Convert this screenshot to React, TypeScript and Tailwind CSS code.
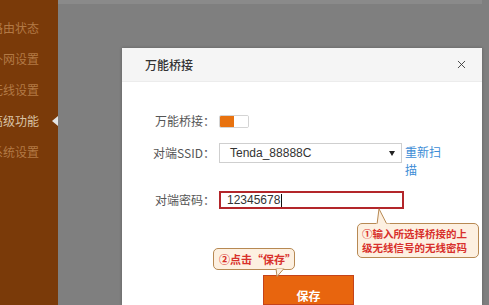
import { X } from "lucide-react";

const navItems = [
  { label: "路由状态", active: false },
  { label: "外网设置", active: false },
  { label: "无线设置", active: false },
  { label: "高级功能", active: true },
  { label: "系统设置", active: false },
];

const cjk = "font-['Noto_Sans_CJK_SC','Noto_Sans',sans-serif]";

export default function App() {
  return (
    <div className={`flex h-[305px] w-[489px] overflow-hidden bg-[#7f7f7f] ${cjk}`}>
      {/* Sidebar */}
      <aside className="flex w-[58px] shrink-0 flex-col overflow-hidden bg-[#7a3a09] pt-[12px]">
        {navItems.map((item) => (
          <div key={item.label} className="flex h-[31px] items-center justify-end gap-[13px]">
            <span
              className={`whitespace-nowrap text-[12px] ${
                item.active ? "text-[#d9c3a6]" : "text-[#b27945]"
              }`}
            >
              {item.label}
            </span>
            <span
              className={`h-0 w-0 border-y-[5px] border-r-[6px] border-y-transparent ${
                item.active ? "border-r-[#e4e4e4]" : "border-r-transparent"
              }`}
            />
          </div>
        ))}
      </aside>

      {/* Main */}
      <main className="flex flex-1 flex-col">
        <div className="h-[9px] bg-[#8a8a8a]" />
        <div className="ml-[64px] mt-[44px] flex w-[360px] flex-1 flex-col bg-white shadow-[0_0_3px_rgba(0,0,0,0.25)]">
          {/* Header */}
          <div className="flex h-[34px] items-center justify-between border-b border-[#ececec] bg-[#f5f5f5] pl-[23px] pr-[14px]">
            <span className="text-[12px] font-medium text-[#333]">万能桥接</span>
            <X className="h-[13px] w-[13px] text-[#333]" strokeWidth={1.6} />
          </div>

          {/* Body */}
          <div className="relative flex-1">
            <div className="flex flex-col pt-[32px] text-[12px] text-[#555]">
              <div className="flex h-[14px] items-center">
                <span className="w-[93px] text-right">万能桥接：</span>
                <div className="ml-[4px] flex h-[13px] w-[30px] overflow-hidden rounded-[2px] border border-[#d4d4d4]">
                  <div className="w-[14px] bg-[#e8720f]" />
                  <div className="flex-1 bg-white" />
                </div>
              </div>

              <div className="mt-[15px] flex items-start">
                <span className="mt-[2px] w-[93px] text-right leading-[16px]">对端SSID：</span>
                <div className="ml-[4px] flex h-[20px] w-[183px] items-center justify-between border border-[#cfcfcf] pl-[10px] pr-[6px] font-['Liberation_Sans',sans-serif] text-[12px] text-[#333]">
                  <span>Tenda_88888C</span>
                  <span className="h-0 w-0 border-x-[3px] border-t-[5px] border-x-transparent border-t-[#222]" />
                </div>
                <span className="ml-[3px] w-[38px] leading-[18px] text-[#3d8dd6]">重新扫描</span>
              </div>

              <div className="mt-[12px] flex items-center">
                <span className="w-[93px] text-right">对端密码：</span>
                <div className="ml-[4px] flex h-[18px] w-[185px] items-center border-2 border-[#b3262a] pl-[6px] font-['Liberation_Sans',sans-serif] text-[12px] text-[#333]">
                  <span>12345678</span>
                  <span className="ml-px h-[13px] w-px bg-[#111]" />
                </div>
              </div>

              <div className="ml-[141px] mt-[66px] flex h-[30px] w-[91px] items-start justify-center border border-[#c4431a] bg-[#e8650e] pt-[11px]">
                <span className="text-[12px] font-bold text-white">保存</span>
              </div>
            </div>

            {/* Annotation 1 */}
            <div className="absolute left-[235px] top-[141px] h-[35px] w-[122px] rounded-[5px] border border-[#b78953] bg-[#fdf0e1] px-[4px] pt-[3px] text-[10.5px] font-bold leading-[14px] whitespace-nowrap text-[#d8302c]">
              <div>①输入所选择桥接的上</div>
              <div>级无线信号的无线密码</div>
              <svg className="absolute -top-[16px] left-[18px]" width="14" height="17" viewBox="0 0 14 17">
                <polygon points="1,16.5 3,0.8 11,16.5" fill="#fdf0e1" stroke="#b78953" strokeWidth="1" />
                <rect x="0" y="15.6" width="14" height="2" fill="#fdf0e1" />
              </svg>
            </div>

            {/* Annotation 2 */}
            <div className="absolute left-[91px] top-[166px] h-[22px] w-[82px] rounded-[5px] border border-[#b78953] bg-[#fdf0e1] pl-[5px] pt-[3px] text-[11px] font-bold leading-[14px] whitespace-nowrap text-[#d8302c]">
              <span>②点击“保存”</span>
              <svg className="absolute -bottom-[8px] left-[60px]" width="12" height="9" viewBox="0 0 12 9">
                <polygon points="2,0.5 3,8.5 10,0.5" fill="#fdf0e1" stroke="#b78953" strokeWidth="1" />
                <rect x="0" y="-1" width="12" height="1.6" fill="#fdf0e1" />
              </svg>
            </div>
          </div>
        </div>
      </main>
      <div className="w-[7px] shrink-0" />
    </div>
  );
}
